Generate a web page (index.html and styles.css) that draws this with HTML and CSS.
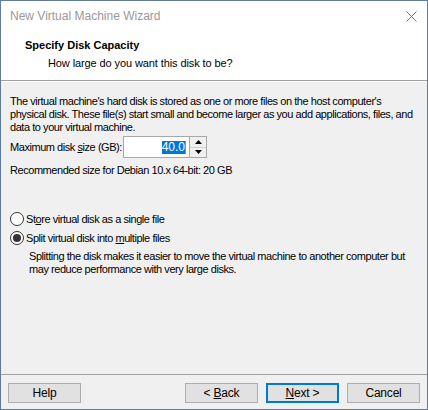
FILE: index.html
```html
<!DOCTYPE html>
<html>
<head>
<meta charset="utf-8">
<link rel="stylesheet" href="styles.css">
</head>
<body>
<div class="window">
  <div class="titlebar">
    <span class="title">New Virtual Machine Wizard</span>
    <svg class="close" width="11" height="11" viewBox="0 0 11 11"><path d="M0.5 0.5L10.5 10.5M10.5 0.5L0.5 10.5" stroke="#7a7a7a" stroke-width="1"/></svg>
  </div>
  <div class="header">
    <div class="h-title">Specify Disk Capacity</div>
    <div class="h-sub">How large do you want this disk to be?</div>
  </div>
  <div class="body">
    <p class="intro">The virtual machine's hard disk is stored as one or more files on the host computer's<br>physical disk. These file(s) start small and become larger as you add applications, files, and<br>data to your virtual machine.</p>
    <div class="size-row">
      <span class="label">Maximum disk <u>s</u>ize (GB):</span>
      <div class="spin">
        <div class="spin-input"><span class="sel">40.0</span><span class="caret"></span></div>
        <div class="spin-btns">
          <div class="spin-btn"><svg width="7" height="4" viewBox="0 0 7 4"><path d="M3.5 0L7 4H0Z" fill="#000"/></svg></div>
          <div class="spin-btn"><svg width="7" height="4" viewBox="0 0 7 4"><path d="M0 0H7L3.5 4Z" fill="#000"/></svg></div>
        </div>
      </div>
    </div>
    <p class="rec">Recommended size for Debian 10.x 64-bit: 20 GB</p>
    <div class="options">
      <div class="radio-row"><span class="radio"></span><span>St<u>o</u>re virtual disk as a single file</span></div>
      <div class="radio-row"><span class="radio checked"></span><span>Split virtual disk into <u>m</u>ultiple files</span></div>
      <p class="desc">Splitting the disk makes it easier to move the virtual machine to another computer but<br>may reduce performance with very large disks.</p>
    </div>
  </div>
  <div class="footer">
    <button class="btn">Help</button>
    <div class="spacer"></div>
    <button class="btn">&lt; <u>B</u>ack</button>
    <button class="btn primary"><u>N</u>ext &gt;</button>
    <button class="btn">Cancel</button>
  </div>
</div>
</body>
</html>
```
FILE: styles.css
```css
html, body {
  margin: 0;
  padding: 0;
}
body {
  font-family: "Liberation Sans", Arial, sans-serif;
  font-size: 11px;
  color: #000;
  background: #fff;
}
.window {
  box-sizing: border-box;
  width: 428px;
  height: 410px;
  border: 1px solid #5f7c9b;
  background: #f0f0f0;
  display: flex;
  flex-direction: column;
}
.titlebar {
  height: 30px;
  background: #fff;
  display: flex;
  align-items: center;
  justify-content: space-between;
  padding: 0 9px 0 9px;
}
.title {
  font-family: "Liberation Sans", Arial, sans-serif;
  font-size: 12px;
  color: #999;
}
.close {
  margin-right: 1px;
}
.header {
  height: 50px;
  background: #fff;
  border-bottom: 1px solid #a0a0a0;
  box-shadow: 0 1px 0 #fff;
  box-sizing: border-box;
  padding: 8px 0 0 24px;
}
.h-title {
  font-weight: bold;
  line-height: 13px;
}
.h-sub {
  margin-top: 5px;
  padding-left: 23px;
  line-height: 13px;
  letter-spacing: -0.1px;
}
.body {
  flex: 1;
  padding: 13px 9px 0 9px;
  margin-top: 1px;
  letter-spacing: -0.45px;
  white-space: nowrap;
}
.intro {
  margin: 0;
  line-height: 13px;
}
.size-row {
  display: flex;
  align-items: center;
  margin-top: 2px;
}
.label {
  width: 113px;
}
.spin {
  display: flex;
  height: 22px;
  box-sizing: border-box;
  border: 1px solid #a8a8a8;
}
.spin-input {
  width: 66px;
  background: #fff;
  display: flex;
  align-items: center;
  justify-content: flex-end;
  padding-right: 3px;
  box-sizing: border-box;
  border-right: 1px solid #a8a8a8;
}
.sel {
  background: #0078d7;
  color: #fff;
  line-height: 13px;
  font-size: 12px;
  letter-spacing: 0;
}
.caret {
  width: 1px;
  height: 13px;
  background: #e07a1f;
}
.spin-btns {
  width: 16px;
  display: flex;
  flex-direction: column;
}
.spin-btn {
  flex: 1;
  display: flex;
  align-items: center;
  justify-content: center;
  background: #f0f0f0;
}
.spin-btn + .spin-btn {
  border-top: 1px solid #d0d0d0;
}
.rec {
  margin: 6px 0 0 0;
  line-height: 13px;
}
.options {
  margin-top: 35px;
}
.radio-row {
  display: flex;
  align-items: center;
  height: 13px;
  margin-bottom: 6px;
}
.radio {
  box-sizing: border-box;
  width: 14px;
  height: 14px;
  border: 1px solid #333;
  border-radius: 50%;
  background: #fff;
  margin-right: 2px;
  display: flex;
  align-items: center;
  justify-content: center;
}
.radio.checked::after {
  content: "";
  width: 8px;
  height: 8px;
  border-radius: 50%;
  background: #333;
}
.desc {
  margin: 4px 0 0 19px;
  line-height: 13px;
}
.footer {
  height: 35px;
  border-top: 1px solid #a0a0a0;
  box-sizing: border-box;
  display: flex;
  align-items: flex-start;
  padding: 8px 7px 0 7px;
  gap: 8px;
}
.spacer {
  flex: 1;
}
.btn {
  box-sizing: border-box;
  width: 73px;
  height: 20px;
  background: #e1e1e1;
  border: 1px solid #adadad;
  font-family: "Liberation Sans", Arial, sans-serif;
  font-size: 12px;
  letter-spacing: -0.2px;
  padding: 0;
  color: #000;
  line-height: 16px;
}
.btn.primary {
  border: 2px solid #0078d7;
}
```
